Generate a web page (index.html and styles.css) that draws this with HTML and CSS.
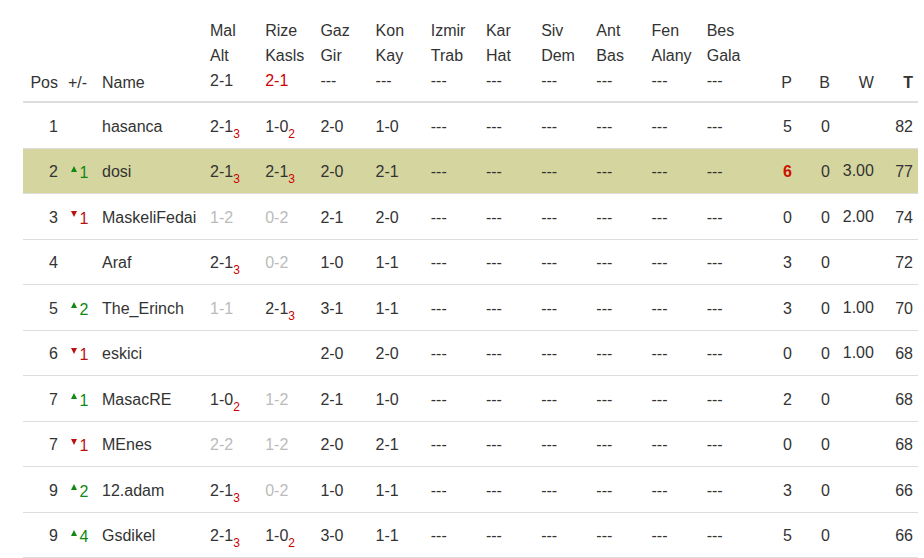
FILE: index.html
```html
<!DOCTYPE html>
<html>
<head>
<meta charset="utf-8">
<link rel="stylesheet" href="styles.css">
</head>
<body>
<div class="wrap">
<table class="tbl">
<colgroup>
<col class="c-pos"><col class="c-chg"><col class="c-name">
<col class="c-m"><col class="c-m"><col class="c-m"><col class="c-m"><col class="c-m">
<col class="c-m"><col class="c-m"><col class="c-m"><col class="c-m"><col class="c-m">
<col class="c-p"><col class="c-b"><col class="c-w"><col class="c-t">
</colgroup>
<thead>
<tr>
<th class="r">Pos</th><th>+/-</th><th>Name</th>
<th class="m"><div>Mal</div><div>Alt</div><div>2-1</div></th>
<th class="m"><div>Rize</div><div>Kasls</div><div class="red">2-1</div></th>
<th class="m"><div>Gaz</div><div>Gir</div><div>---</div></th>
<th class="m"><div>Kon</div><div>Kay</div><div>---</div></th>
<th class="m"><div>Izmir</div><div>Trab</div><div>---</div></th>
<th class="m"><div>Kar</div><div>Hat</div><div>---</div></th>
<th class="m"><div>Siv</div><div>Dem</div><div>---</div></th>
<th class="m"><div>Ant</div><div>Bas</div><div>---</div></th>
<th class="m"><div>Fen</div><div>Alany</div><div>---</div></th>
<th class="m"><div>Bes</div><div>Gala</div><div>---</div></th>
<th class="r">P</th><th class="r">B</th><th class="r">W</th><th class="r bold">T</th>
</tr>
</thead>
<tbody>
<tr>
<td class="r">1</td><td></td><td>hasanca</td>
<td>2-1<span class="s">3</span></td><td>1-0<span class="s">2</span></td><td>2-0</td><td>1-0</td>
<td>---</td><td>---</td><td>---</td><td>---</td><td>---</td><td>---</td>
<td class="r">5</td><td class="r">0</td><td class="r"></td><td class="r">82</td>
</tr>
<tr class="hl">
<td class="r">2</td><td><span class="up"></span><span class="cu">1</span></td><td>dosi</td>
<td>2-1<span class="s">3</span></td><td>2-1<span class="s">3</span></td><td>2-0</td><td>2-1</td>
<td>---</td><td>---</td><td>---</td><td>---</td><td>---</td><td>---</td>
<td class="r"><span class="pr">6</span></td><td class="r">0</td><td class="r"><span class="w">3.00</span></td><td class="r">77</td>
</tr>
<tr>
<td class="r">3</td><td><span class="dn"></span><span class="cd">1</span></td><td>MaskeliFedai</td>
<td class="g">1-2</td><td class="g">0-2</td><td>2-1</td><td>2-0</td>
<td>---</td><td>---</td><td>---</td><td>---</td><td>---</td><td>---</td>
<td class="r">0</td><td class="r">0</td><td class="r"><span class="w">2.00</span></td><td class="r">74</td>
</tr>
<tr>
<td class="r">4</td><td></td><td>Araf</td>
<td>2-1<span class="s">3</span></td><td class="g">0-2</td><td>1-0</td><td>1-1</td>
<td>---</td><td>---</td><td>---</td><td>---</td><td>---</td><td>---</td>
<td class="r">3</td><td class="r">0</td><td class="r"></td><td class="r">72</td>
</tr>
<tr>
<td class="r">5</td><td><span class="up"></span><span class="cu">2</span></td><td>The_Erinch</td>
<td class="g">1-1</td><td>2-1<span class="s">3</span></td><td>3-1</td><td>1-1</td>
<td>---</td><td>---</td><td>---</td><td>---</td><td>---</td><td>---</td>
<td class="r">3</td><td class="r">0</td><td class="r"><span class="w">1.00</span></td><td class="r">70</td>
</tr>
<tr>
<td class="r">6</td><td><span class="dn"></span><span class="cd">1</span></td><td>eskici</td>
<td></td><td></td><td>2-0</td><td>2-0</td>
<td>---</td><td>---</td><td>---</td><td>---</td><td>---</td><td>---</td>
<td class="r">0</td><td class="r">0</td><td class="r"><span class="w">1.00</span></td><td class="r">68</td>
</tr>
<tr>
<td class="r">7</td><td><span class="up"></span><span class="cu">1</span></td><td>MasacRE</td>
<td>1-0<span class="s">2</span></td><td class="g">1-2</td><td>2-1</td><td>1-0</td>
<td>---</td><td>---</td><td>---</td><td>---</td><td>---</td><td>---</td>
<td class="r">2</td><td class="r">0</td><td class="r"></td><td class="r">68</td>
</tr>
<tr>
<td class="r">7</td><td><span class="dn"></span><span class="cd">1</span></td><td>MEnes</td>
<td class="g">2-2</td><td class="g">1-2</td><td>2-0</td><td>2-1</td>
<td>---</td><td>---</td><td>---</td><td>---</td><td>---</td><td>---</td>
<td class="r">0</td><td class="r">0</td><td class="r"></td><td class="r">68</td>
</tr>
<tr>
<td class="r">9</td><td><span class="up"></span><span class="cu">2</span></td><td>12.adam</td>
<td>2-1<span class="s">3</span></td><td class="g">0-2</td><td>1-0</td><td>1-1</td>
<td>---</td><td>---</td><td>---</td><td>---</td><td>---</td><td>---</td>
<td class="r">3</td><td class="r">0</td><td class="r"></td><td class="r">66</td>
</tr>
<tr>
<td class="r">9</td><td><span class="up"></span><span class="cu">4</span></td><td>Gsdikel</td>
<td>2-1<span class="s">3</span></td><td>1-0<span class="s">2</span></td><td>3-0</td><td>1-1</td>
<td>---</td><td>---</td><td>---</td><td>---</td><td>---</td><td>---</td>
<td class="r">5</td><td class="r">0</td><td class="r"></td><td class="r">66</td>
</tr>
</tbody>
</table>
</div>
</body>
</html>
```
FILE: styles.css
```css
html, body {
  margin: 0;
  padding: 0;
  background: #fff;
}
body {
  font-family: "Liberation Sans", Arial, sans-serif;
  font-size: 16px;
  color: #333;
}
.wrap {
  padding: 8px 0 0 23px;
}
.tbl {
  border-collapse: separate;
  border-spacing: 0;
  table-layout: fixed;
  width: 895px;
}
.c-pos { width: 40px; }
.c-chg { width: 34px; }
.c-name { width: 108px; }
.c-m { width: 55.2px; }
.c-p { width: 40px; }
.c-b { width: 38px; }
.c-w { width: 44px; }
.c-t { width: 39px; }

.tbl th {
  font-weight: normal;
  text-align: left;
  vertical-align: bottom;
  line-height: 25.5px;
  padding: 10px 5px 5.3px;
  border-bottom: 2px solid #ddd;
  white-space: nowrap;
}
.tbl th.m {
  line-height: 25px;
  padding-bottom: 8px;
}
.tbl th.bold { font-weight: bold; }
.tbl td {
  line-height: 25.5px;
  padding: 10.5px 5px 8.5px;
  border-bottom: 1px solid #ddd;
  white-space: nowrap;
  vertical-align: top;
}
.tbl .r { text-align: right; }
.red { color: #cc0000; }
.hl td { background: #d5d69f; }
.g { color: #bbb; }
.s {
  color: #cc0000;
  font-size: 12px;
  line-height: 0;
  vertical-align: -5.5px;
}
.up, .dn {
  display: inline-block;
  width: 0;
  height: 0;
  border-left: 3.5px solid transparent;
  border-right: 3.5px solid transparent;
  margin: 0 2.5px 0 3px;
  vertical-align: 5.5px;
}
.up { border-bottom: 6px solid #118811; }
.dn { border-top: 6px solid #bb1111; }
.cu { color: #118811; line-height: 0; vertical-align: -1px; }
.cd { color: #bb1111; line-height: 0; vertical-align: -1px; }
.pr { color: #cc1100; font-weight: bold; }
.w { line-height: 0; vertical-align: 1.5px; }
```
